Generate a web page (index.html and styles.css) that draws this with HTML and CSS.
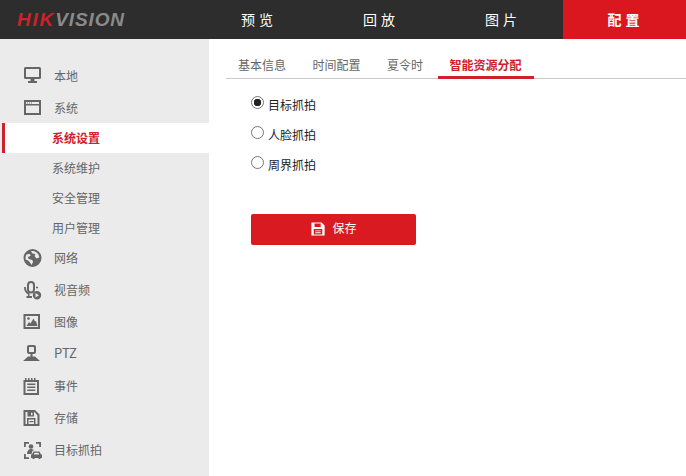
FILE: index.html
```html
<!DOCTYPE html>
<html lang="zh-CN">
<head>
<meta charset="utf-8">
<title>配置</title>
<link rel="stylesheet" href="styles.css">
</head>
<body>
<header class="topbar">
  <div class="logo"><span class="logo-red">HIK</span><span class="logo-grey">VISION</span></div>
  <nav class="topnav">
    <a class="topnav-item">预览</a>
    <a class="topnav-item">回放</a>
    <a class="topnav-item">图片</a>
    <a class="topnav-item is-active">配置</a>
  </nav>
</header>
<div class="page">
  <aside class="sidebar">
    <div class="menu-item">
      <svg class="menu-icon" viewBox="0 0 18 18"><path fill-rule="evenodd" d="M2.500 1h14A1.500 1.500 0 0 1 18 2.500v9a1.500 1.500 0 0 1-1.500 1.500h-5v2H14v2H5v-2h2.500v-2h-5A1.500 1.500 0 0 1 1 11.500v-9A1.500 1.500 0 0 1 2.500 1zM3 3v8h13V3z"/></svg>
      <span>本地</span>
    </div>
    <div class="menu-item">
      <svg class="menu-icon" viewBox="0 0 18 18"><path fill-rule="evenodd" d="M1 2h17v15H1zm2 5.500V15h13V7.500zM3 4v2h13V4z"/><path d="M4 4.500h1v1H4zM6 4.500h1v1H6zM8 4.500h1v1H8z"/></svg>
      <span>系统</span>
    </div>
    <div class="submenu">
      <div class="submenu-item is-active">系统设置</div>
      <div class="submenu-item">系统维护</div>
      <div class="submenu-item">安全管理</div>
      <div class="submenu-item">用户管理</div>
    </div>
    <div class="menu-item">
      <svg class="menu-icon" viewBox="0 0 18 18"><path fill-rule="evenodd" transform="translate(0.500 1)" d="M9 0a9 9 0 1 1 0 18A9 9 0 0 1 9 0zM3 5.500C2 7 1.800 9 2.300 10.800 4 11 5.500 12 6.500 13.500L8 16c.5-1.500 1.500-2 1.500-3.500S8 11 7 10.500 4.500 10 4.500 8.500 6.500 8 7 6.500 5 4.500 3 5.500zM7.500 2.200 9 4.500l3 .5L11 7l2 2.500 2.900-1C15.500 5 12 1.200 7.500 2.200z"/></svg>
      <span>网络</span>
    </div>
    <div class="menu-item">
      <svg class="menu-icon" viewBox="0 0 18 18"><path fill-rule="evenodd" d="M8 1a4 4 0 0 1 4 4v4.500a4 4 0 0 1-8 0V5a4 4 0 0 1 4-4zm0 2a2 2 0 0 0-2 2v4.500a2 2 0 0 0 4 0V5a2 2 0 0 0-2-2z"/><path d="M1 7h1.800c0 2.500 1 5 3.700 6.300V16H9v2H3.500v-2h1.500v-1.500C2 13 1 10 1 7z"/><path fill-rule="evenodd" d="M14 11a4.200 4.200 0 1 1 0 8.400 4.200 4.200 0 0 1 0-8.400zm-1.500 2v4.400l3.500-2.200z"/><circle cx="14" cy="7.500" r="1.100"/></svg>
      <span>视音频</span>
    </div>
    <div class="menu-item">
      <svg class="menu-icon" viewBox="0 0 18 18"><path fill-rule="evenodd" d="M.5 2H17v15H.5zm2 2v11H15V4z"/><path d="M3.500 14l2.500-4 1.500 1.500 3-5 1.500 3 1-.5 1.500 5z"/><circle cx="5.500" cy="6.500" r="1.300"/></svg>
      <span>图像</span>
    </div>
    <div class="menu-item">
      <svg class="menu-icon" viewBox="0 0 18 18"><path fill-rule="evenodd" d="M6 1h5a2 2 0 0 1 2 2v5a2 2 0 0 1-2 2h-1.500v2.500H12l5 4.500H0l5-4.500h2.500V10H6a2 2 0 0 1-2-2V3a2 2 0 0 1 2-2zm.5 2a.5.5 0 0 0-.5.5v4a.5.5 0 0 0 .5.5h4a.5.5 0 0 0 .5-.5v-4a.5.5 0 0 0-.5-.5z"/></svg>
      <span class="menu-latin">PTZ</span>
    </div>
    <div class="menu-item">
      <svg class="menu-icon" viewBox="0 0 18 18"><path fill-rule="evenodd" d="M.5 4h1.500V2h1.500v2h1.500V2h1.500v2h1.500V2h1.500v2h1.500V2h1.500v2H16v15H.5zm2 2v11H14V6z"/><path d="M4.300 7.500h8V9h-8zM4.300 10.500h8V12h-8zM4.300 13.500h8V15h-8z"/></svg>
      <span>事件</span>
    </div>
    <div class="menu-item">
      <svg class="menu-icon" viewBox="0 0 18 18"><path fill-rule="evenodd" d="M.5 2H12l4.500 4.500V18H.5zm2 2v12h12V7.500L11.500 4z"/><path fill-rule="evenodd" d="M4.500 4h6.500v4.500H4.500zm3.500.8v2.500h1.500V4.800zM4 10h8.500v6H11v-4.500H5.500V16H4z"/><path d="M6.500 13h4v1.200h-4z"/></svg>
      <span>存储</span>
    </div>
    <div class="menu-item">
      <svg class="menu-icon" viewBox="0 0 18 18"><path d="M1 7V2h5v1.800H2.800V7zM13 2h5v5h-1.800V3.800H13zM1 14h1.800v3.200H6V19H1z"/><circle cx="8" cy="6.500" r="2.300"/><path d="M4 14c0-3 1.500-5 4-5 1.500 0 2.500.5 3 1.500H9.500L8.500 14z"/><path fill-rule="evenodd" d="M10.500 11.500h6l1.500 3h1V18h-1.500v1h-2v-1h-4v1h-2v-1H8v-3.500h1zm1 1.200-.6 1.800h5.200l-.6-1.800z"/></svg>
      <span>目标抓拍</span>
    </div>
  </aside>
  <main class="content">
    <div class="tabs">
      <a class="tab">基本信息</a>
      <a class="tab">时间配置</a>
      <a class="tab">夏令时</a>
      <a class="tab is-active">智能资源分配</a>
    </div>
    <form class="options">
      <label class="option"><input class="radio" type="radio" name="mode" checked><span>目标抓拍</span></label>
      <label class="option"><input class="radio" type="radio" name="mode"><span>人脸抓拍</span></label>
      <label class="option"><input class="radio" type="radio" name="mode"><span>周界抓拍</span></label>
      <button class="save" type="button">
        <svg class="save-icon" viewBox="0 0 18 18"><path fill-rule="evenodd" d="M.5.500h13l4 4v13H.5zM4.500 1.800v4.500h8V1.800zM3.500 9v7.200h11V9zM5.500 10.800h7V12h-7zM5.500 13.300h7v1.200h-7z"/></svg>
        <span class="save-label">保存</span>
      </button>
    </form>
  </main>
</div>
</body>
</html>
```
FILE: styles.css
```css
* { box-sizing: border-box; }
html, body { margin: 0; height: 100%; }
body {
  font-family: "Noto Sans CJK SC", "Noto Sans", sans-serif;
  font-size: 12px;
  background: #fff;
  overflow: hidden;
}
.topbar {
  display: flex;
  justify-content: space-between;
  height: 39px;
  background: #2d2d2d;
}
.logo {
  padding-left: 17px;
  font: italic bold 19px/39px "Liberation Sans", sans-serif;
}
.logo-red { color: #d0202a; letter-spacing: 1.800px; }
.logo-grey { color: #8a8a8a; letter-spacing: 0.900px; }
.topnav { display: flex; }
.topnav-item {
  width: 122px;
  padding-left: 2px;
  color: #fff;
  font-size: 14px;
  line-height: 39px;
  letter-spacing: 4px;
  text-align: center;
}
.topnav-item.is-active {
  width: 123px;
  background: #da171e;
  font-weight: 700;
}
.page { display: flex; height: 437px; }
.sidebar {
  flex: none;
  width: 209px;
  padding-top: 20px;
  background: #ebebeb;
  color: #666;
}
.menu-item {
  display: flex;
  align-items: center;
  gap: 13px;
  height: 32px;
  padding-left: 23px;
}
.menu-icon { flex: none; width: 18px; height: 18px; fill: #666; overflow: visible; }
.menu-latin { font-size: 13px; line-height: 16px; }
.submenu { margin-bottom: -2px; }
.submenu-item {
  height: 30px;
  padding-left: 52px;
  line-height: 29px;
}
.submenu-item.is-active {
  margin-left: 2px;
  padding-left: 47px;
  border-left: 3px solid #d0202a;
  background: #fff;
  color: #d0202a;
  font-weight: 700;
}
.content { flex: 1; padding: 12px 0 0 17px; }
.tabs {
  display: flex;
  gap: 2.500px;
  height: 28px;
  border-bottom: 1px solid #c8c8c8;
}
.tab {
  height: 28px;
  padding: 0 12px;
  color: #666;
  line-height: 28px;
}
.tab.is-active {
  color: #d0202a;
  font-weight: 700;
  border-bottom: 3px solid #d0202a;
}
.options { padding: 10px 0 0 25px; }
.option {
  display: flex;
  align-items: center;
  gap: 4px;
  height: 30px;
  color: #222;
}
.radio {
  appearance: none;
  flex: none;
  width: 13px;
  height: 13px;
  margin: -3px 0 0;
  border: 1px solid #767676;
  border-radius: 50%;
  background: #fff;
}
.radio:checked {
  background: radial-gradient(circle, #222 0 3.500px, transparent 4px);
}
.save {
  display: flex;
  align-items: center;
  justify-content: center;
  gap: 7px;
  width: 165px;
  height: 31px;
  margin-top: 35px;
  padding: 0 2px 2px 3px;
  border: 0;
  border-radius: 2px;
  background: #d91a20;
  color: #fff;
  font: inherit;
}
.save-icon { width: 14px; height: 14px; fill: #fff; }
.save-label { margin-top: -2px; }
```
